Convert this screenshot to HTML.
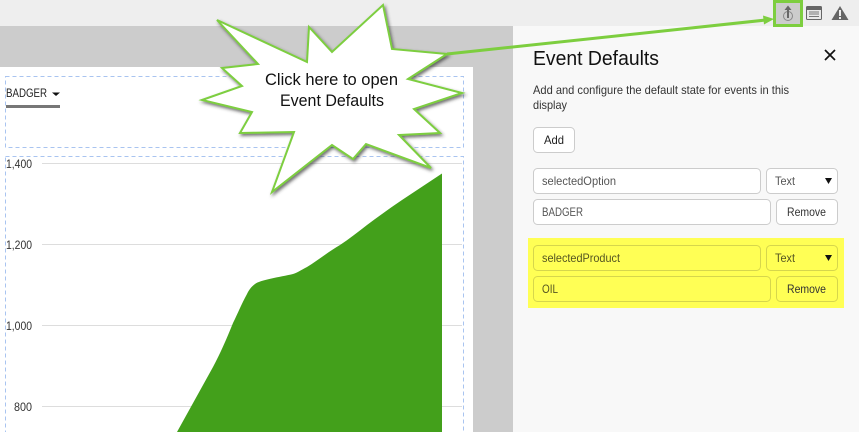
<!DOCTYPE html>
<html><head><meta charset="utf-8"><title>Event Defaults</title>
<style>
html,body{margin:0;padding:0;background:#f8f8f8}
svg{display:block}
text{font-family:"Liberation Sans",sans-serif;font-size:12px;fill:#555}
.f{fill:#fff;stroke:#ccc;stroke-width:1}
.y{fill:#ffff55;stroke:#d6d64c;stroke-width:1}
.g{stroke:#ddd;stroke-width:1}
.d{fill:none;stroke:#a9c4f0;stroke-width:1;stroke-dasharray:4 3}
.ax{fill:#333;font-size:12px}
</style></head>
<body>
<svg width="859" height="432" viewBox="0 0 859 432" xmlns="http://www.w3.org/2000/svg">
<defs><filter id="s" x="-10%" y="-10%" width="125%" height="125%"><feDropShadow dx="1.5" dy="2" stdDeviation="1.5" flood-color="#333" flood-opacity=".7"/></filter></defs>
<rect width="859" height="432" fill="#f8f8f8"/>
<rect width="859" height="26" fill="#eee"/>
<rect y="26" width="513" height="406" fill="#ccc"/>
<rect y="67" width="473" height="365" fill="#fff"/>

<rect class="d" x="5.5" y="76.5" width="458" height="71"/>
<rect class="d" x="5.5" y="156.5" width="458" height="290"/>
<line class="g" x1="42" y1="163.5" x2="462" y2="163.5"/>
<line class="g" x1="42" y1="244.5" x2="462" y2="244.5"/>
<line class="g" x1="42" y1="325.5" x2="462" y2="325.5"/>
<line class="g" x1="42" y1="406.5" x2="462" y2="406.5"/>
<text class="ax" x="6" y="168" textLength="26" lengthAdjust="spacingAndGlyphs">1,400</text>
<text class="ax" x="6" y="249" textLength="26" lengthAdjust="spacingAndGlyphs">1,200</text>
<text class="ax" x="6" y="330" textLength="26" lengthAdjust="spacingAndGlyphs">1,000</text>
<text class="ax" x="14" y="411" textLength="18" lengthAdjust="spacingAndGlyphs">800</text>

<text x="6" y="97" textLength="41" lengthAdjust="spacingAndGlyphs" style="fill:#222">BADGER</text>
<path d="M52 92.500h8l-4 3.500z" fill="#111"/>
<rect x="6" y="105" width="54" height="3" fill="#777"/>

<path d="M442 173.500L402 200C390 208 378 217 367 225C358 232 349 239 340 245C328 252 317 261 307 267C301 270 297 273 293 274C280 277 260 280 255 284C251 287 249 290 247 294C241 305 238 313 233 323C227 338 220 354 213 367L177 432H442Z" fill="#43a01b"/>

<polygon points="217,20 307,62 309,27 332,52 383,5 392,49 447,54 408,79 462,93 414,109 440,133 399,135 431,168 366,144 353,159 332,145 272,192 294,132 240,133 252,112 202,100 242,86 222,68 258,64" fill="#fff" stroke="#7dce3f" stroke-width="2" filter="url(#s)"/>
<text x="265" y="85" textLength="133" lengthAdjust="spacingAndGlyphs" style="font-size:16.500px;fill:#111">Click here to open</text>
<text x="280" y="106" textLength="104" lengthAdjust="spacingAndGlyphs" style="font-size:16.500px;fill:#111">Event Defaults</text>

<line x1="447" y1="54" x2="766" y2="20" stroke="#7dce3f" stroke-width="3"/>
<path d="M763 15.500L774 19L764 24.500Z" fill="#7dce3f"/>
<rect x="774.500" y="1.500" width="27" height="24" fill="#ccc" stroke="#7dce3f" stroke-width="3"/>
<circle cx="788" cy="16" r="4.500" fill="none" stroke="#888" stroke-width="1"/>
<path d="M787 18V10h-2.500l3.500-4.500 3.500 4.500h-2.500v8z" fill="#666"/>
<rect x="806.500" y="6.500" width="15" height="13" rx="1" fill="#e8e8e8" stroke="#666"/>
<rect x="807" y="7" width="14" height="3" fill="#666"/>
<path d="M809 12h10M809 14h10M809 16.500h10" stroke="#777" stroke-width="1"/>
<path d="M840 6l8.500 14h-17z" fill="#666"/>
<rect x="839" y="10" width="2" height="6" fill="#eee"/>
<rect x="839" y="17" width="2" height="2" fill="#eee"/>

<text x="533" y="65" textLength="126" lengthAdjust="spacingAndGlyphs" style="font-size:20px;fill:#111">Event Defaults</text>
<path d="M825 50L835 60M835 50L825 60" stroke="#111" stroke-width="1.700"/>
<text x="533" y="94" textLength="256" lengthAdjust="spacingAndGlyphs" style="fill:#333">Add and configure the default state for events in this</text>
<text x="533" y="109" textLength="34" lengthAdjust="spacingAndGlyphs" style="fill:#333">display</text>

<rect class="f" x="533.500" y="127.500" width="41" height="25" rx="4"/>
<text x="544" y="144" textLength="20" lengthAdjust="spacingAndGlyphs" style="fill:#222">Add</text>

<rect class="f" x="533.500" y="168.500" width="227" height="25" rx="4"/>
<text x="542" y="185" textLength="74" lengthAdjust="spacingAndGlyphs">selectedOption</text>
<rect class="f" x="766.500" y="168.500" width="71" height="25" rx="4"/>
<text x="775" y="185" textLength="20" lengthAdjust="spacingAndGlyphs">Text</text>
<path d="M825 178h7l-3.500 6z" fill="#111"/>
<rect class="f" x="533.500" y="199.500" width="237" height="25" rx="4"/>
<text x="542" y="216" textLength="41" lengthAdjust="spacingAndGlyphs">BADGER</text>
<rect class="f" x="776.500" y="199.500" width="61" height="25" rx="4"/>
<text x="787" y="216" textLength="39" lengthAdjust="spacingAndGlyphs" style="fill:#333">Remove</text>

<rect x="528" y="238" width="316" height="70" fill="#ffff55"/>
<rect class="y" x="533.500" y="245.500" width="227" height="25" rx="4"/>
<text x="542" y="262" textLength="78" lengthAdjust="spacingAndGlyphs" style="fill:#555522">selectedProduct</text>
<rect class="y" x="766.500" y="245.500" width="71" height="25" rx="4"/>
<text x="775" y="262" textLength="20" lengthAdjust="spacingAndGlyphs" style="fill:#555522">Text</text>
<path d="M825 255h7l-3.500 6z" fill="#111"/>
<rect class="y" x="533.500" y="276.500" width="237" height="25" rx="4"/>
<text x="542" y="293" textLength="16" lengthAdjust="spacingAndGlyphs" style="fill:#555522">OIL</text>
<rect class="y" x="776.500" y="276.500" width="61" height="25" rx="4"/>
<text x="787" y="293" textLength="39" lengthAdjust="spacingAndGlyphs" style="fill:#333">Remove</text>
</svg>
</body></html>
